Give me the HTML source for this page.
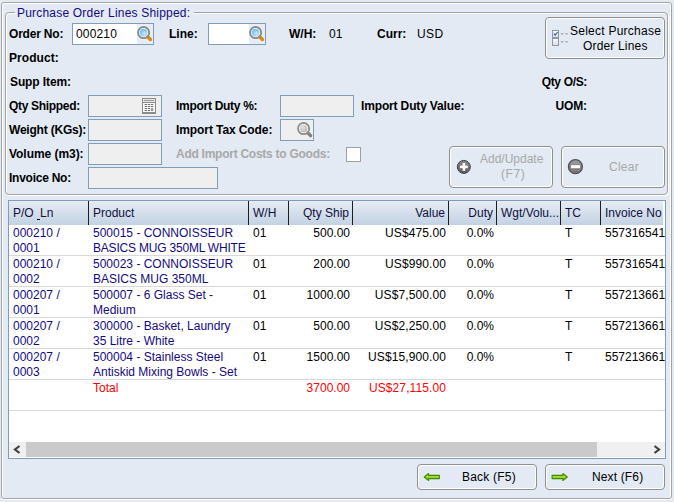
<!DOCTYPE html>
<html><head><meta charset="utf-8"><style>
*{box-sizing:border-box;margin:0;padding:0}
html,body{width:674px;height:502px;overflow:hidden;background:#e3eaf3;font-family:"Liberation Sans",sans-serif;font-size:12px;line-height:15px;color:#000}
.a{position:absolute;white-space:nowrap}
.b{font-weight:bold}
.g{color:#a8a8a8}
.win{position:absolute;left:1px;top:2px;width:671px;height:497px;border:1px solid #a3a3a3;border-radius:3px;box-shadow:inset 1px 1px 0 #fff,inset -1px 0 0 #fff,0 1px 0 #fff}
.grp{position:absolute;left:5px;top:12px;width:663px;height:183px;border:1px solid #a3a3a3;border-radius:4px;box-shadow:inset 1px 1px 0 #fff, 1px 1px 0 #fff}
.fld{position:absolute;border:1px solid #7f9db9;background:#fff;height:22px}
.dis{background:#efefef}
.btn{position:absolute;border:1px solid #8f8f8f;border-radius:4px;box-shadow:inset 1px 1px 0 #fff,inset -1px -1px 0 #fff;background:#e3eaf3}
.hd{position:absolute;top:201px;height:24px;background:linear-gradient(#e6ecf5,#c3d2e3)}
.dv{position:absolute;top:201px;width:1px;height:24px;background:#1e1e1e}
.rl{position:absolute;left:9px;width:656px;height:1px;background:#d9d9d9}
.nv{color:#140a80}
.rd{color:#ff0000}
svg{position:absolute;overflow:visible}
</style></head><body>
<div class="win"></div>
<div class="grp"></div>
<div class="a" style="left:15px;top:6px;padding:0 4px 0 2px;background:#e3eaf3;color:#140a80;letter-spacing:0.2px">Purchase Order Lines Shipped:</div>
<div class="a b" style="left:9px;top:27px;letter-spacing:-0.19px;">Order No:</div>
<div class="a b" style="left:9px;top:51px;letter-spacing:0.07px;">Product:</div>
<div class="a b" style="left:10px;top:75px;letter-spacing:-0.11px;">Supp Item:</div>
<div class="a b" style="left:9px;top:99px;letter-spacing:-0.32px;">Qty Shipped:</div>
<div class="a b" style="left:9px;top:123px;letter-spacing:-0.21px;">Weight (KGs):</div>
<div class="a b" style="left:9px;top:147px;letter-spacing:-0.05px;">Volume (m3):</div>
<div class="a b" style="left:9px;top:171px;letter-spacing:-0.25px;">Invoice No:</div>
<div class="fld" style="left:72px;top:23px;width:82px"></div>
<div class="a" style="left:137px;top:24px;width:16px;height:20px;background:#e8edf4"></div>
<svg style="left:137px;top:26px" width="16" height="16"><defs><radialGradient id="bg137" cx="0.6" cy="0.62" r="0.75"><stop offset="0" stop-color="#c4ecfb"/><stop offset="1" stop-color="#5aa8e4"/></radialGradient></defs><line x1="10.8" y1="10.8" x2="13.4" y2="13.4" stroke="#dc8c14" stroke-width="3.6" stroke-linecap="round"/><circle cx="6.6" cy="6.6" r="5.5" fill="none" stroke="#8a8a8a" stroke-width="2"/><circle cx="6.6" cy="6.6" r="4.1" fill="url(#bg137)" stroke="#f6f8fa" stroke-width="0.8"/></svg>
<div class="a " style="left:76px;top:27px;letter-spacing:0.16px;">000210</div>
<div class="a b" style="left:169px;top:27px;">Line:</div>
<div class="fld" style="left:208px;top:23px;width:58px"></div>
<div class="a" style="left:249px;top:24px;width:16px;height:20px;background:#e8edf4"></div>
<svg style="left:249px;top:26px" width="16" height="16"><defs><radialGradient id="bg249" cx="0.6" cy="0.62" r="0.75"><stop offset="0" stop-color="#c4ecfb"/><stop offset="1" stop-color="#5aa8e4"/></radialGradient></defs><line x1="10.8" y1="10.8" x2="13.4" y2="13.4" stroke="#dc8c14" stroke-width="3.6" stroke-linecap="round"/><circle cx="6.6" cy="6.6" r="5.5" fill="none" stroke="#8a8a8a" stroke-width="2"/><circle cx="6.6" cy="6.6" r="4.1" fill="url(#bg249)" stroke="#f6f8fa" stroke-width="0.8"/></svg>
<div class="a b" style="left:289px;top:27px;">W/H:</div>
<div class="a " style="left:329px;top:27px;">01</div>
<div class="a b" style="left:377px;top:27px;">Curr:</div>
<div class="a " style="left:417px;top:27px;letter-spacing:0.4px;">USD</div>
<div class="btn" style="left:545px;top:17px;width:120px;height:42px"></div>
<svg style="left:552px;top:30px" width="18" height="16"><defs><linearGradient id="cbg" x1="0" y1="0" x2="0" y2="1"><stop offset="0" stop-color="#fbfbfc"/><stop offset="1" stop-color="#d8dde3"/></linearGradient></defs><rect x="0.5" y="0.5" width="6" height="7" fill="url(#cbg)" stroke="#8d99a8"/><path d="M1.8 3.6 L3.2 5.2 L5.6 2.2" fill="none" stroke="#2a64b8" stroke-width="1.1"/><rect x="0.5" y="8.5" width="6" height="7" fill="url(#cbg)" stroke="#8d99a8"/><rect x="8.8" y="3.2" width="2.6" height="1.2" fill="#a2a2a2"/><rect x="13.2" y="3.2" width="2.6" height="1.2" fill="#a2a2a2"/><rect x="8.8" y="11.2" width="2.6" height="1.2" fill="#a2a2a2"/><rect x="13.2" y="11.2" width="2.6" height="1.2" fill="#a2a2a2"/></svg>
<div class="a " style="left:570px;top:24px;letter-spacing:0.25px;">Select Purchase</div>
<div class="a " style="left:583px;top:39px;letter-spacing:0.17px;">Order Lines</div>
<div class="a b" style="right:87px;top:75px;letter-spacing:-0.34px;">Qty O/S:</div>
<div class="a b" style="right:87px;top:99px;letter-spacing:-0.13px;">UOM:</div>
<div class="fld dis" style="left:88px;top:95px;width:74px"></div>
<svg style="left:142px;top:98px" width="14" height="16"><rect x="0" y="0" width="14" height="16" fill="#8c8c8c"/><rect x="1" y="1" width="12" height="3" fill="#e6e6e6"/><rect x="2" y="2" width="10" height="1" fill="#9a9a9a"/><rect x="1" y="5" width="12" height="9" fill="#f8f8f8"/><rect x="2.7" y="6" width="2.3" height="1" fill="#6e6e6e"/><rect x="5.8" y="6" width="2.3" height="1" fill="#6e6e6e"/><rect x="8.9" y="6" width="2.3" height="1" fill="#6e6e6e"/><rect x="2.7" y="8" width="2.3" height="1" fill="#6e6e6e"/><rect x="5.8" y="8" width="2.3" height="1" fill="#6e6e6e"/><rect x="8.9" y="8" width="2.3" height="1" fill="#6e6e6e"/><rect x="2.7" y="10" width="2.3" height="1" fill="#6e6e6e"/><rect x="5.8" y="10" width="2.3" height="1" fill="#6e6e6e"/><rect x="2.7" y="12" width="2.3" height="1" fill="#6e6e6e"/><rect x="5.8" y="12" width="2.3" height="1" fill="#6e6e6e"/><rect x="8.9" y="10" width="2.3" height="3" fill="#9a9a9a"/></svg>
<div class="fld dis" style="left:88px;top:119px;width:74px"></div>
<div class="fld dis" style="left:88px;top:143px;width:74px"></div>
<div class="fld dis" style="left:88px;top:167px;width:130px"></div>
<div class="a b" style="left:176px;top:99px;letter-spacing:-0.29px;">Import Duty %:</div>
<div class="fld dis" style="left:280px;top:95px;width:74px"></div>
<div class="a b" style="left:361px;top:99px;letter-spacing:-0.15px;">Import Duty Value:</div>
<div class="a b" style="left:176px;top:123px;letter-spacing:-0.09px;">Import Tax Code:</div>
<div class="fld dis" style="left:280px;top:119px;width:34px"></div>
<svg style="left:297px;top:122px" width="16" height="16"><defs><radialGradient id="gg" cx="0.4" cy="0.35" r="0.75"><stop offset="0" stop-color="#e2e2e2"/><stop offset="1" stop-color="#b0b0b0"/></radialGradient></defs><line x1="10.6" y1="10.6" x2="13.6" y2="13.6" stroke="#808080" stroke-width="3.4" stroke-linecap="round"/><circle cx="6.6" cy="6.6" r="5.5" fill="none" stroke="#8e8e8e" stroke-width="2"/><circle cx="6.6" cy="6.6" r="4.1" fill="url(#gg)" stroke="#f4f4f4" stroke-width="1"/></svg>
<div class="a b g" style="left:176px;top:147px;letter-spacing:-0.26px;">Add Import Costs to Goods:</div>
<div class="a" style="left:346px;top:147px;width:15px;height:15px;border:1px solid #a0a0a0;background:#fff"></div>
<div class="btn" style="left:449px;top:146px;width:104px;height:42px"></div>
<svg style="left:456px;top:159px" width="16" height="16"><defs><linearGradient id="pg" x1="0" y1="0" x2="0" y2="1"><stop offset="0" stop-color="#8a8a8a"/><stop offset="1" stop-color="#5a5a5a"/></linearGradient></defs><circle cx="7.8" cy="7.9" r="6.5" fill="url(#pg)" stroke="#404040" stroke-width="1"/><rect x="4" y="6.6" width="7.8" height="2.6" fill="#fff"/><rect x="6.6" y="4" width="2.6" height="7.8" fill="#fff"/></svg>
<div class="a g" style="left:480px;top:152px;">Add/Update</div>
<div class="a g" style="left:501px;top:167px;letter-spacing:0.6px;">(F7)</div>
<div class="btn" style="left:561px;top:146px;width:104px;height:42px"></div>
<svg style="left:567px;top:158px" width="18" height="18"><defs><linearGradient id="mg" x1="0" y1="0" x2="0" y2="1"><stop offset="0" stop-color="#a0a0a0"/><stop offset="1" stop-color="#707070"/></linearGradient></defs><circle cx="8.4" cy="8.7" r="7" fill="url(#mg)" stroke="#505050" stroke-width="1.2"/><rect x="4" y="7.2" width="9" height="3" fill="#fff"/></svg>
<div class="a g" style="left:609px;top:160px;letter-spacing:0.27px;">Clear</div>
<div class="a" style="left:8px;top:200px;width:658px;height:259px;border:1px solid #7f9db9;background:#fff"></div>
<div class="hd" style="left:9px;width:654px"></div>
<div class="dv" style="left:88px"></div>
<div class="dv" style="left:248px"></div>
<div class="dv" style="left:288px"></div>
<div class="dv" style="left:352px"></div>
<div class="dv" style="left:448px"></div>
<div class="dv" style="left:496px"></div>
<div class="dv" style="left:560px"></div>
<div class="dv" style="left:600px"></div>
<div class="a " style="left:13px;top:206px;color:#10103c;">P/O <span style="display:inline-block;width:3px;height:1px;background:#000;vertical-align:-3px;margin-left:-0.5px;margin-right:0.5px"></span>Ln</div>
<div class="a " style="left:93px;top:206px;color:#10103c;">Product</div>
<div class="a " style="left:253px;top:206px;color:#10103c;">W/H</div>
<div class="a " style="right:325px;top:206px;color:#10103c;">Qty Ship</div>
<div class="a " style="right:229px;top:206px;color:#10103c;">Value</div>
<div class="a " style="right:181px;top:206px;color:#10103c;">Duty</div>
<div class="a " style="left:501px;top:206px;color:#10103c;">Wgt/Volu...</div>
<div class="a " style="left:565px;top:206px;color:#10103c;">TC</div>
<div class="a " style="left:605px;top:206px;color:#10103c;">Invoice No</div>
<div class="a nv" style="left:13px;top:226px;">000210 /<br>0001</div>
<div class="a nv" style="left:93px;top:226px;">500015 - CONNOISSEUR<br><span style="letter-spacing:-0.2px">BASICS MUG 350ML WHITE</span></div>
<div class="a " style="left:253px;top:226px;">01</div>
<div class="a " style="right:324px;top:226px;">500.00</div>
<div class="a " style="right:228px;top:226px;letter-spacing:0.1px;">US$475.00</div>
<div class="a " style="right:180px;top:226px;">0.0%</div>
<div class="a " style="left:565px;top:226px;">T</div>
<div class="a " style="left:605px;top:226px;width:60px;overflow:hidden">557316541</div>
<div class="rl" style="top:255px"></div>
<div class="a nv" style="left:13px;top:257px;">000210 /<br>0002</div>
<div class="a nv" style="left:93px;top:257px;">500023 - CONNOISSEUR<br>BASICS MUG 350ML</div>
<div class="a " style="left:253px;top:257px;">01</div>
<div class="a " style="right:324px;top:257px;">200.00</div>
<div class="a " style="right:228px;top:257px;letter-spacing:0.1px;">US$990.00</div>
<div class="a " style="right:180px;top:257px;">0.0%</div>
<div class="a " style="left:565px;top:257px;">T</div>
<div class="a " style="left:605px;top:257px;width:60px;overflow:hidden">557316541</div>
<div class="rl" style="top:286px"></div>
<div class="a nv" style="left:13px;top:288px;">000207 /<br>0001</div>
<div class="a nv" style="left:93px;top:288px;">500007 - 6 Glass Set -<br>Medium</div>
<div class="a " style="left:253px;top:288px;">01</div>
<div class="a " style="right:324px;top:288px;">1000.00</div>
<div class="a " style="right:228px;top:288px;letter-spacing:0.1px;">US$7,500.00</div>
<div class="a " style="right:180px;top:288px;">0.0%</div>
<div class="a " style="left:565px;top:288px;">T</div>
<div class="a " style="left:605px;top:288px;width:60px;overflow:hidden">557213661</div>
<div class="rl" style="top:317px"></div>
<div class="a nv" style="left:13px;top:319px;">000207 /<br>0002</div>
<div class="a nv" style="left:93px;top:319px;">300000 - Basket, Laundry<br>35 Litre - White</div>
<div class="a " style="left:253px;top:319px;">01</div>
<div class="a " style="right:324px;top:319px;">500.00</div>
<div class="a " style="right:228px;top:319px;letter-spacing:0.1px;">US$2,250.00</div>
<div class="a " style="right:180px;top:319px;">0.0%</div>
<div class="a " style="left:565px;top:319px;">T</div>
<div class="a " style="left:605px;top:319px;width:60px;overflow:hidden">557213661</div>
<div class="rl" style="top:348px"></div>
<div class="a nv" style="left:13px;top:350px;">000207 /<br>0003</div>
<div class="a nv" style="left:93px;top:350px;">500004 - Stainless Steel<br>Antiskid Mixing Bowls - Set</div>
<div class="a " style="left:253px;top:350px;">01</div>
<div class="a " style="right:324px;top:350px;">1500.00</div>
<div class="a " style="right:228px;top:350px;letter-spacing:0.1px;">US$15,900.00</div>
<div class="a " style="right:180px;top:350px;">0.0%</div>
<div class="a " style="left:565px;top:350px;">T</div>
<div class="a " style="left:605px;top:350px;width:60px;overflow:hidden">557213661</div>
<div class="rl" style="top:379px"></div>
<div class="a rd" style="left:93px;top:381px;">Total</div>
<div class="a rd" style="right:324px;top:381px;">3700.00</div>
<div class="a rd" style="right:228px;top:381px;letter-spacing:0.1px;">US$27,115.00</div>
<div class="rl" style="top:410px"></div>
<div class="a" style="left:9px;top:442px;width:656px;height:15px;background:#f0f0f0"></div>
<div class="a" style="left:26px;top:442px;width:571px;height:15px;background:#cacaca"></div>
<svg style="left:13px;top:445px" width="9" height="10"><path d="M6.5 1 L2 4.5 L6.5 8" fill="none" stroke="#404040" stroke-width="2.2"/></svg>
<svg style="left:653px;top:445px" width="9" height="10"><path d="M1.5 1 L6 4.5 L1.5 8" fill="none" stroke="#404040" stroke-width="2.2"/></svg>
<div class="btn" style="left:417px;top:464px;width:120px;height:26px"></div>
<svg style="left:423px;top:472px" width="18" height="11"><defs><linearGradient id="ag423" x1="0" y1="0" x2="0" y2="1"><stop offset="0" stop-color="#c8ec50"/><stop offset="1" stop-color="#7cc010"/></linearGradient></defs><path d="M1.2 5 L5.6 1.5 L5.6 3.4 L16.4 3.4 L16.4 6.6 L5.6 6.6 L5.6 8.5 Z" fill="url(#ag423)" stroke="#3f8c00" stroke-width="1.1" stroke-linejoin="round"/></svg>
<div class="a " style="left:462px;top:470px;letter-spacing:0.21px;">Back (F5)</div>
<div class="btn" style="left:545px;top:464px;width:120px;height:26px"></div>
<svg style="left:551px;top:472px" width="18" height="11"><defs><linearGradient id="ag551" x1="0" y1="0" x2="0" y2="1"><stop offset="0" stop-color="#c8ec50"/><stop offset="1" stop-color="#7cc010"/></linearGradient></defs><path d="M16.3 5 L11.9 1.5 L11.9 3.4 L1.1 3.4 L1.1 6.6 L11.9 6.6 L11.9 8.5 Z" fill="url(#ag551)" stroke="#3f8c00" stroke-width="1.1" stroke-linejoin="round"/></svg>
<div class="a " style="left:592px;top:470px;letter-spacing:0.14px;">Next (F6)</div>
</body></html>
